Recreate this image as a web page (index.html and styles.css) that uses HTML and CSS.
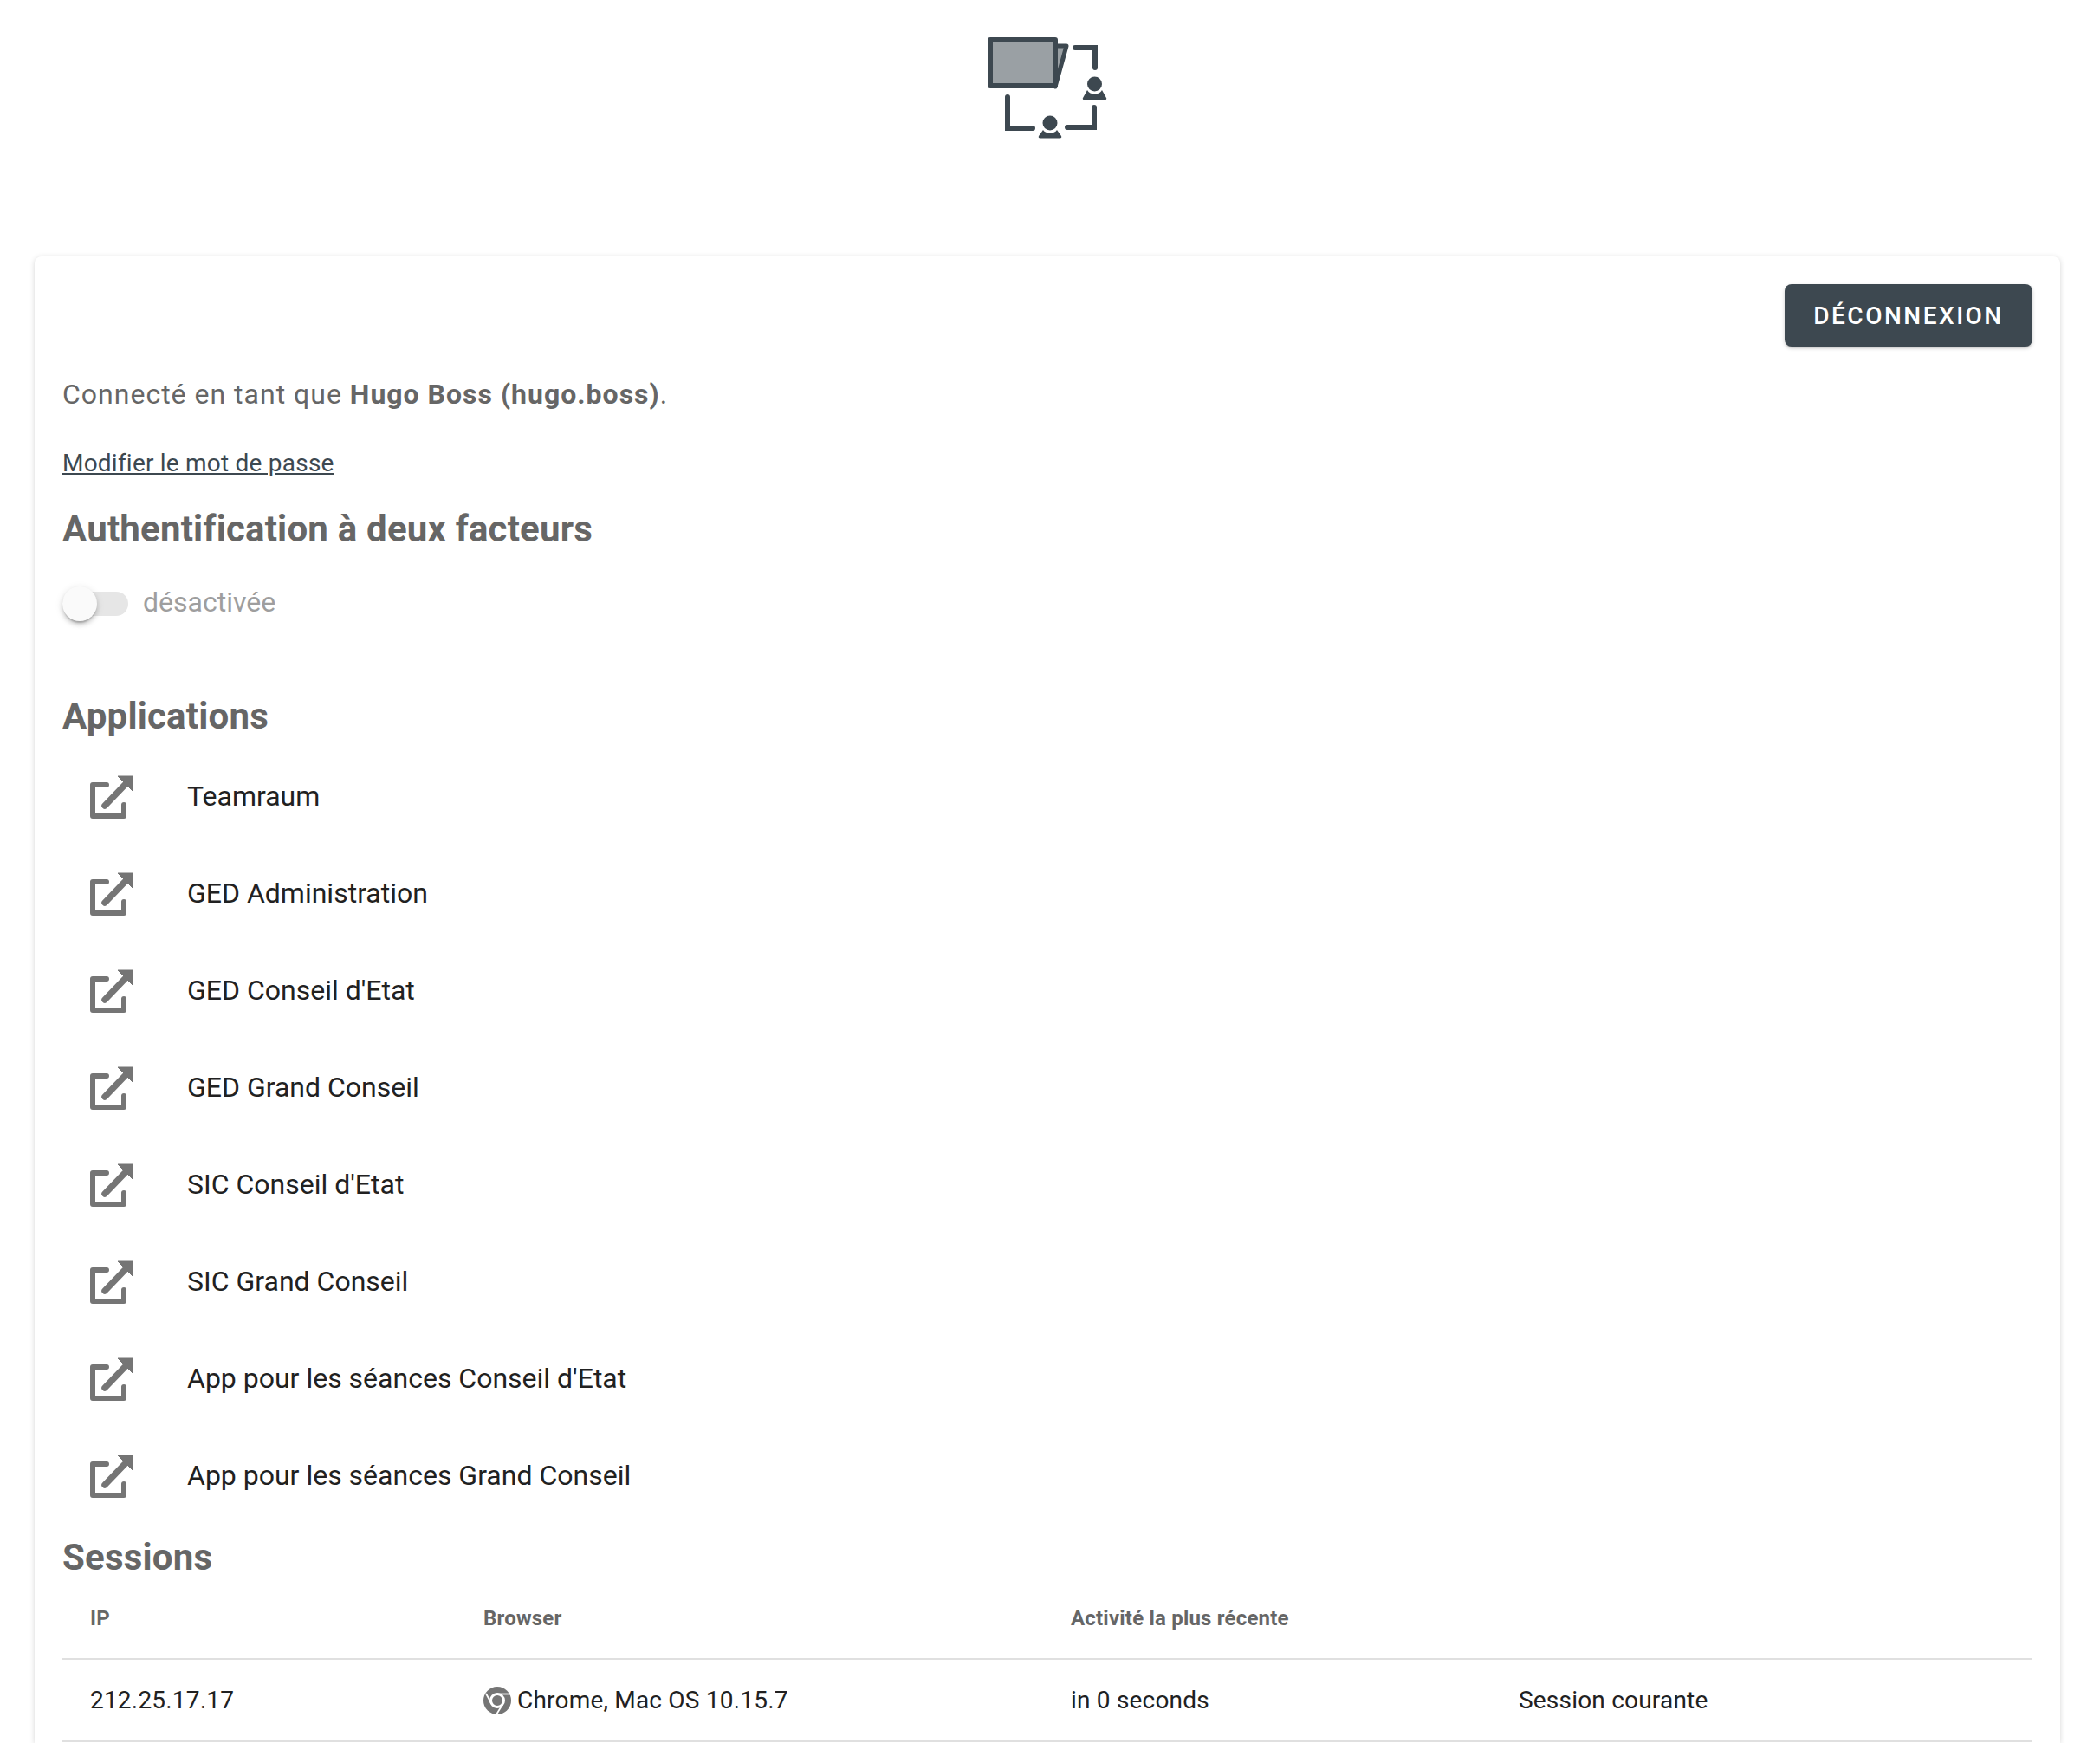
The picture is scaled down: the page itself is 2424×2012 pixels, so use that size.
FILE: index.html
```html
<!DOCTYPE html>
<html lang="fr">
<head>
  <meta charset="UTF-8">
  <title>Compte</title>
  <link rel="stylesheet" href="styles.css">
</head>
<body>

  <header class="top">
    <svg class="logo" viewBox="0 0 220 160" width="220" height="160">
      <path d="M118 33H131L118 80Z" fill="#9aa0a4" stroke="#3d4850" stroke-width="5" stroke-linejoin="round"/>
      <rect x="43" y="26" width="75" height="53" fill="#9aa0a4" stroke="#3d4850" stroke-width="6" stroke-linejoin="round"/>
      <g fill="none" stroke="#3d4850" stroke-width="6" stroke-linecap="round">
        <path d="M141 35H164V58"/>
        <path d="M63 92V128H92"/>
        <path d="M132 127H163V104"/>
      </g>
      <g fill="#3d4850">
        <circle cx="163.500" cy="77" r="8.500"/>
        <path d="M155 84C158 90 169 90 172 84L177 93Q178 95.500 175 95.500H152Q149 95.500 150 93Z"/>
        <circle cx="112" cy="122" r="8.500"/>
        <path d="M104 130C107 135 117 135 120 130L125 137Q126 139.500 123 139.500H101Q98 139.500 99 137Z"/>
      </g>
    </svg>
  </header>

  <main class="card">
    <div class="actions">
      <button class="logout">Déconnexion</button>
    </div>

    <p class="whoami">Connecté en tant que <strong>Hugo Boss (hugo.boss)</strong>.</p>
    <p class="password"><a href="#">Modifier le mot de passe</a></p>

    <h2 class="two-factor">Authentification à deux facteurs</h2>
    <div class="switch-row">
      <span class="switch"><span class="thumb"></span></span>
      <span class="switch-label">désactivée</span>
    </div>

    <h2 class="apps-title">Applications</h2>
    <ul class="apps">
      <li>
        <svg class="ext" viewBox="20 20 60 60" width="60" height="60"><path class="ext-line" d="M43 35H27V71H63V58"/><path class="ext-arrow" d="M41 59L66 33"/><path class="ext-head" d="M56 25H73V42Z"/></svg>
        <span>Teamraum</span>
      </li>
      <li>
        <svg class="ext" viewBox="20 20 60 60" width="60" height="60"><path class="ext-line" d="M43 35H27V71H63V58"/><path class="ext-arrow" d="M41 59L66 33"/><path class="ext-head" d="M56 25H73V42Z"/></svg>
        <span>GED Administration</span>
      </li>
      <li>
        <svg class="ext" viewBox="20 20 60 60" width="60" height="60"><path class="ext-line" d="M43 35H27V71H63V58"/><path class="ext-arrow" d="M41 59L66 33"/><path class="ext-head" d="M56 25H73V42Z"/></svg>
        <span>GED Conseil d'Etat</span>
      </li>
      <li>
        <svg class="ext" viewBox="20 20 60 60" width="60" height="60"><path class="ext-line" d="M43 35H27V71H63V58"/><path class="ext-arrow" d="M41 59L66 33"/><path class="ext-head" d="M56 25H73V42Z"/></svg>
        <span>GED Grand Conseil</span>
      </li>
      <li>
        <svg class="ext" viewBox="20 20 60 60" width="60" height="60"><path class="ext-line" d="M43 35H27V71H63V58"/><path class="ext-arrow" d="M41 59L66 33"/><path class="ext-head" d="M56 25H73V42Z"/></svg>
        <span>SIC Conseil d'Etat</span>
      </li>
      <li>
        <svg class="ext" viewBox="20 20 60 60" width="60" height="60"><path class="ext-line" d="M43 35H27V71H63V58"/><path class="ext-arrow" d="M41 59L66 33"/><path class="ext-head" d="M56 25H73V42Z"/></svg>
        <span>SIC Grand Conseil</span>
      </li>
      <li>
        <svg class="ext" viewBox="20 20 60 60" width="60" height="60"><path class="ext-line" d="M43 35H27V71H63V58"/><path class="ext-arrow" d="M41 59L66 33"/><path class="ext-head" d="M56 25H73V42Z"/></svg>
        <span>App pour les séances Conseil d'Etat</span>
      </li>
      <li>
        <svg class="ext" viewBox="20 20 60 60" width="60" height="60"><path class="ext-line" d="M43 35H27V71H63V58"/><path class="ext-arrow" d="M41 59L66 33"/><path class="ext-head" d="M56 25H73V42Z"/></svg>
        <span>App pour les séances Grand Conseil</span>
      </li>
    </ul>

    <h2 class="sessions-title">Sessions</h2>
    <table class="sessions">
      <colgroup>
        <col class="col-ip"><col class="col-browser"><col class="col-activity"><col>
      </colgroup>
      <thead>
        <tr><th>IP</th><th>Browser</th><th>Activité la plus récente</th><th></th></tr>
      </thead>
      <tbody>
        <tr>
          <td>212.25.17.17</td>
          <td>
            <span class="browser">
              <svg viewBox="0 0 32 32" width="32" height="32">
                <circle cx="16" cy="16" r="16" fill="#757575"/>
                <circle cx="16" cy="16" r="7.500" fill="#757575" stroke="#fff" stroke-width="3"/>
                <g stroke="#fff" stroke-width="1.800" fill="none">
                  <path d="M16 8.500H31"/>
                  <path d="M9.500 20L3 8"/>
                  <path d="M22.500 20L15 32"/>
                </g>
              </svg>
              Chrome, Mac OS 10.15.7
            </span>
          </td>
          <td>in 0 seconds</td>
          <td>Session courante</td>
        </tr>
      </tbody>
    </table>
  </main>

</body>
</html>
```

FILE: styles.css
```css
html, body {
  height: 100%;
  overflow: hidden;
}

body {
  margin: 0;
  padding: 0 46px 0 40px;
  box-sizing: border-box;
  background: #fff;
  font-family: Roboto, sans-serif;
  font-size: 32px;
  color: #666;
}

.top {
  height: 296px;
  padding-top: 20px;
  box-sizing: border-box;
  display: flex;
  justify-content: center;
}

.logo {
  display: block;
  margin-left: 2px;
}

.card {
  background: #fff;
  border-radius: 8px 8px 0 0;
  padding: 32px;
  height: 1716px;
  box-sizing: border-box;
  box-shadow: 0 2px 2px -1px rgba(0, 0, 0, 0.14), 0 1px 6px 0 rgba(0, 0, 0, 0.16);
}

.actions {
  display: flex;
  justify-content: flex-end;
}

.logout {
  width: 286px;
  height: 72px;
  border: none;
  border-radius: 8px;
  background: #3d4850;
  color: #fff;
  font-family: inherit;
  font-size: 28px;
  font-weight: 500;
  letter-spacing: 2.500px;
  text-transform: uppercase;
  box-shadow: 0 3px 2px -2px rgba(0, 0, 0, 0.2), 0 2px 4px 0 rgba(0, 0, 0, 0.2);
}

.whoami {
  margin: 32px 0 0;
  line-height: 46px;
  letter-spacing: 1px;
}

.whoami strong {
  font-weight: 700;
}

.password {
  margin: 34px 0 0;
  line-height: 46px;
  font-size: 28px;
  letter-spacing: 0.220px;
}

.password a {
  color: #3d4850;
}

h2 {
  margin: 0;
  font-size: 42px;
  font-weight: 700;
  letter-spacing: 0.200px;
  line-height: 56px;
  color: #666;
}

.two-factor {
  margin-top: 25px;
}

.switch-row {
  display: flex;
  align-items: center;
  height: 40px;
  margin-top: 38px;
}

.switch {
  position: relative;
  display: block;
  width: 76px;
  height: 28px;
  border-radius: 14px;
  background: #e6e6e6;
}

.thumb {
  position: absolute;
  left: 0;
  top: -6px;
  width: 40px;
  height: 40px;
  border-radius: 50%;
  background: #fafafa;
  box-shadow: 0 4px 2px -2px rgba(0, 0, 0, 0.2), 0 4px 5px 0 rgba(0, 0, 0, 0.14), 0 2px 10px 0 rgba(0, 0, 0, 0.12);
}

.switch-label {
  margin-left: 17px;
  padding-bottom: 5px;
  color: #9e9e9e;
}

.apps-title {
  margin-top: 82px;
}

.apps {
  list-style: none;
  margin: 10px 0 0;
  padding: 0;
}

.apps li {
  display: flex;
  align-items: center;
  height: 112px;
  padding-left: 28px;
  color: #212121;
}

.apps li span {
  padding-bottom: 5px;
}

.ext {
  display: block;
  margin-right: 56px;
}

.ext-line, .ext-arrow {
  fill: none;
  stroke: #757575;
  stroke-width: 6;
  stroke-linecap: round;
  stroke-linejoin: round;
}

.ext-arrow {
  stroke-width: 7.500;
}

.ext-head {
  fill: #757575;
  stroke: #757575;
  stroke-width: 1;
  stroke-linejoin: round;
}

.sessions-title {
  margin-top: 9px;
}

.sessions {
  width: 100%;
  border-collapse: collapse;
  table-layout: fixed;
}

.col-ip {
  width: 454px;
}

.col-browser {
  width: 678px;
}

.col-activity {
  width: 517px;
}

.sessions th {
  height: 89px;
  padding: 0 32px 5px;
  border-bottom: 2px solid #e0e0e0;
  box-sizing: border-box;
  text-align: left;
  font-size: 24px;
  font-weight: 700;
  letter-spacing: 0.200px;
  color: #666;
}

.sessions td {
  height: 95px;
  padding: 0 32px;
  border-bottom: 2px solid #e0e0e0;
  box-sizing: border-box;
  font-size: 28px;
  letter-spacing: 0.200px;
  color: #212121;
}

.browser {
  display: flex;
  align-items: center;
  gap: 7px;
}
```
